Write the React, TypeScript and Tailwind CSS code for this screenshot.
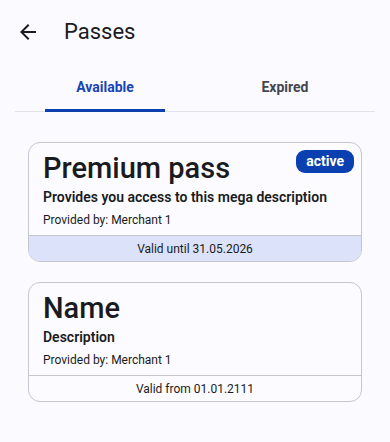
import React, { useState } from 'react';

type Pass = {
  name: string;
  description: string;
  merchant: string;
  validity: string;
  active?: boolean;
};

const passes: Pass[] = [
  {
    name: 'Premium pass',
    description: 'Provides you access to this mega description',
    merchant: 'Merchant 1',
    validity: 'Valid until 31.05.2026',
    active: true,
  },
  {
    name: 'Name',
    description: 'Description',
    merchant: 'Merchant 1',
    validity: 'Valid from 01.01.2111',
  },
];

const BackArrow: React.FC = () => (
  <svg width="24" height="24" viewBox="0 0 24 24" className="text-[#1b1b1f]">
    <path d="M20 11H7.83l5.59-5.59L12 4l-8 8 8 8 1.41-1.41L7.83 13H20v-2z" fill="currentColor" />
  </svg>
);

const PassCard: React.FC<{ pass: Pass }> = ({ pass }) => (
  <div className="rounded-xl border border-[#c5c6d0] bg-[#fcfbff] overflow-hidden">
    <div className="px-[14px] pt-[8px] pb-[6px]">
      <div className="flex items-start justify-between">
        <h2 className="text-[29px] leading-[34px] font-medium text-[#1a1b20]">{pass.name}</h2>
        {pass.active && (
          <span className="-mt-px -mr-[7px] rounded-[9px] bg-[#0a40b0] px-[10px] h-[23px] flex items-center text-[14px] font-bold text-white">
            active
          </span>
        )}
      </div>
      <p className="mt-[2px] text-[14px] leading-[20px] font-semibold text-[#1a1b20]">{pass.description}</p>
      <p className="mt-[4px] text-[12px] leading-[18px] text-[#1a1b20]">Provided by: {pass.merchant}</p>
    </div>
    <div
      className={`border-t border-[#c5c6d0] h-[26px] flex items-center justify-center text-[12px] text-[#1a1b20] ${
        pass.active ? 'bg-[#dbe2f9]' : ''
      }`}
    >
      {pass.validity}
    </div>
  </div>
);

export default function App() {
  const [tab, setTab] = useState<'available' | 'expired'>('available');

  return (
    <div className="min-h-[442px] w-[390px] bg-[#fbfaff] font-['Roboto',sans-serif] text-[#1a1b20]">
      <header className="flex items-center h-[64px] px-[16px]">
        <button className="w-[24px] h-[24px] flex items-center justify-center">
          <BackArrow />
        </button>
        <h1 className="ml-[24px] text-[22px] leading-[28px] text-[#1a1b20]">Passes</h1>
      </header>

      <nav className="mx-[15px] flex border-b border-[#e3e2e9]">
        {(['available', 'expired'] as const).map((t) => (
          <button
            key={t}
            onClick={() => setTab(t)}
            className="flex-1 h-[47px] flex flex-col items-center justify-center relative"
          >
            <span
              className={`text-[14px] font-bold ${
                tab === t ? 'text-[#1844b4]' : 'text-[#44464f]'
              }`}
            >
              {t === 'available' ? 'Available' : 'Expired'}
            </span>
            {tab === t && (
              <span className="absolute bottom-[-1px] left-[30px] right-[30px] h-[3px] bg-[#0a40b0]" />
            )}
          </button>
        ))}
      </nav>

      <main className="px-[28px] pt-[30px] flex flex-col gap-[20px]">
        {passes.map((p) => (
          <PassCard key={p.name} pass={p} />
        ))}
      </main>
    </div>
  );
}
